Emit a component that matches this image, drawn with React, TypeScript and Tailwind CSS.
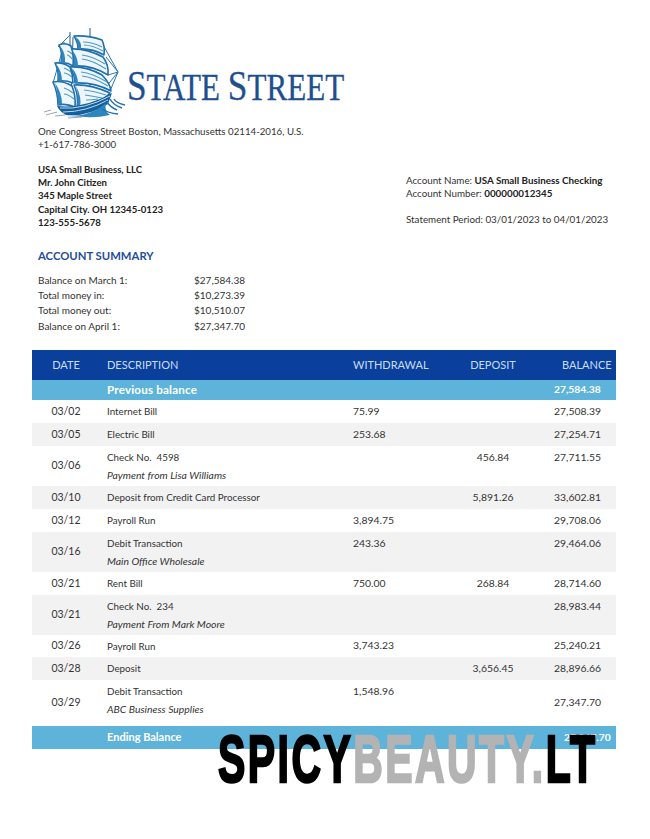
const rows = [
  { date: "03/02", desc: "Internet Bill", out: "75.99", bal: "27,508.39", h: "h-[23px]" },
  { date: "03/05", desc: "Electric Bill", out: "253.68", bal: "27,254.71", h: "h-[23px]", shade: true },
  { date: "03/06", desc: "Check No.  4598", note: "Payment from Lisa Williams", dep: "456.84", bal: "27,711.55", h: "h-[40px]" },
  { date: "03/10", desc: "Deposit from Credit Card Processor", dep: "5,891.26", bal: "33,602.81", h: "h-[23px]", shade: true },
  { date: "03/12", desc: "Payroll Run", out: "3,894.75", bal: "29,708.06", h: "h-[23px]" },
  { date: "03/16", desc: "Debit Transaction", note: "Main Office Wholesale", out: "243.36", bal: "29,464.06", h: "h-[40px]", shade: true },
  { date: "03/21", desc: "Rent Bill", out: "750.00", dep: "268.84", bal: "28,714.60", h: "h-[23px]" },
  { date: "03/21", desc: "Check No.  234", note: "Payment From Mark Moore", bal: "28,983.44", h: "h-[40px]", shade: true },
  { date: "03/26", desc: "Payroll Run", out: "3,743.23", bal: "25,240.21", h: "h-[22px]" },
  { date: "03/28", desc: "Deposit", dep: "3,656.45", bal: "28,896.66", h: "h-[23px]", shade: true },
  { date: "03/29", desc: "Debit Transaction", note: "ABC Business Supplies", out: "1,548.96", bal: "27,347.70", h: "h-[46px]", midBal: true },
];

const summary = [
  ["Balance on March 1:", "$27,584.38"],
  ["Total money in:", "$10,273.39"],
  ["Total money out:", "$10,510.07"],
  ["Balance on April 1:", "$27,347.70"],
];

const cols = "grid grid-cols-[68px_253px_94px_92px_77px]";

function ShipLogo() {
  const sails = [
    "M34 11 Q48 10 62 15 Q65 21 64 30 Q52 23 38 24 Q38 17 34 11Z",
    "M30 24 Q46 23 63 32 Q69 40 68 50 Q52 40 34 41 Q35 32 30 24Z",
    "M30 42 Q46 41 62 50 Q70 58 71 66 Q54 57 35 58 Q35 50 30 42Z",
    "M34 60 Q50 59 70 68 L62 76 Q50 80 37 83 Q39 71 34 60Z",
    "M19 20 Q25 17 31 21 Q34 30 33 41 Q27 37 21 38 Q23 28 19 20Z",
    "M15 38 Q23 37 30 42 Q33 50 33 58 Q26 55 18 56 Q19 46 15 38Z",
    "M13 57 Q22 55 32 61 Q36 71 35 82 Q26 78 18 80 Q18 68 13 57Z",
  ];
  const shades = [
    "M36 12 Q42 17 41 24 L38 24 Q38 17 36 12Z",
    "M32 25 Q38 32 38 41 L34 41 Q35 32 32 25Z",
    "M32 43 Q38 50 38 58 L35 58 Q35 50 32 43Z",
    "M36 61 Q42 72 40 82 L37 83 Q39 71 36 61Z",
    "M20 21 Q26 28 25 38 L21 38 Q23 28 20 21Z",
    "M16 39 Q22 46 22 56 L18 56 Q19 46 16 39Z",
    "M15 58 Q22 68 22 79 L18 80 Q18 68 15 58Z",
  ];
  const hatch = [
    "M43 17 Q52 17 62 22", "M44 20 Q52 20 63 26", "M42 30 Q52 31 65 39", "M42 34 Q52 35 66 44",
    "M41 47 Q52 48 67 57", "M42 51 Q53 52 68 61", "M27 26 Q29 26 32 29", "M27 30 Q29 30 32 34",
    "M24 43 Q27 44 31 47", "M24 48 Q27 48 32 52", "M24 63 Q28 64 33 68", "M24 69 Q28 69 34 74", "M44 65 Q54 66 66 70", "M45 70 Q52 71 62 73", "M46 75 Q52 75 58 74",
  ];
  return (
    <svg viewBox="0 0 100 95" className="w-[100px] h-[95px] shrink-0">
      <path d="M50 3 L50 14 M30 7 L30 24 M33 12 L31 80 M50 14 L50 78 M24 17 L22 80" stroke="#1d5c98" strokeWidth="1" fill="none" />
      <path d="M62 18 L78 47 L66 62 M66 32 L78 47 M68 50 L78 47 M70 66 L78 47 M24 20 L13 58 M30 10 L18 22" stroke="#2a78b0" strokeWidth="1" fill="none" />
      {sails.map((d, i) => (
        <path key={i} d={d} fill="#eef6fb" stroke="#1f70ac" strokeWidth="1.6" strokeLinejoin="round" />
      ))}
      {shades.map((d, i) => (
        <path key={i} d={d} fill="#2f86bd" />
      ))}
      {hatch.map((d, i) => (
        <path key={i} d={d} fill="none" stroke="#4f9ac8" strokeWidth="1.1" />
      ))}
      <path d="M17 81 Q44 84 72 68 L68 79 Q48 92 26 90 Q20 87 17 81Z" fill="#14609f" />
      <path d="M20 83 Q44 85 70 71 M23 87 Q46 87 68 75" stroke="#cfe6f3" strokeWidth="0.9" fill="none" />
      <path d="M26 91 Q50 92 66 78 Q64 86 70 90 Q56 93 46 92Z" fill="#2f86bd" />
      <path d="M66 76 Q70 82 77 85 M70 74 Q73 80 82 83 M74 74 Q76 78 85 80 M62 84 Q68 88 78 89" stroke="#1f70ac" strokeWidth="1.4" fill="none" />
      <path d="M4 87 L11 85 M6 90 L17 87 M15 91 L25 90 M28 93 L42 92" stroke="#8fa9bd" strokeWidth="1" fill="none" />
    </svg>
  );
}

function Row({ r }: { r: (typeof rows)[number] }) {
  return (
    <div className={`${cols} ${r.h} ${r.shade ? "bg-[#f2f2f2]" : ""} text-[#333]`}>
      <div className="flex items-center justify-center pt-[1px] text-[10.5px]">{r.date}</div>
      <div className={`pl-[7px] flex flex-col ${r.note ? "pt-[2px]" : "justify-center"}`}>
        <div className="text-[9.8px] leading-[18px] whitespace-pre">{r.desc}</div>
        {r.note && <div className="text-[10.4px] leading-[18px] italic">{r.note}</div>}
      </div>
      <div className={`flex text-[10.4px] ${r.note ? "pt-[2px] leading-[18px]" : "items-center"}`}>{r.out}</div>
      <div className={`flex justify-center text-[10.4px] ${r.note ? "pt-[2px] leading-[18px]" : "items-center"}`}>{r.dep}</div>
      <div className={`flex pl-[15px] text-[10.4px] ${r.note && !r.midBal ? "pt-[2px] leading-[18px]" : "items-center"}`}>{r.bal}</div>
    </div>
  );
}

export default function App() {
  return (
    <div className="relative w-[650px] h-[839px] overflow-hidden bg-white font-['Lato',sans-serif] text-[#333]">
      <div className="flex items-start pt-[25px] pl-[40px] h-[122px]">
        <ShipLogo />
        <div className="mt-[40px] -ml-[13px] origin-left scale-x-[0.84] font-['Liberation_Serif',serif] text-[#1e4f8f] whitespace-nowrap leading-none [-webkit-text-stroke:0.3px_currentColor]">
          <span className="text-[42px]">S</span>
          <span className="text-[37px]">TATE </span>
          <span className="text-[42px]">S</span>
          <span className="text-[37px]">TREET</span>
        </div>
      </div>

      <div className="pl-[38px] pt-[3px] text-[9.7px] leading-[12.5px]">
        <div>One Congress Street Boston, Massachusetts  02114-2016, U.S.</div>
        <div>+1-617-786-3000</div>
      </div>

      <div className="flex pl-[38px] pt-[13px]">
        <div className="w-[368px] text-[9.6px] leading-[13.2px] font-bold text-[#222]">
          <div>USA Small Business,  LLC</div>
          <div>Mr. John Citizen</div>
          <div>345 Maple  Street</div>
          <div>Capital City. OH 12345-0123</div>
          <div>123-555-5678</div>
        </div>
        <div className="pt-[11px] text-[9.8px] leading-[13px]">
          <div>Account Name: <b className="text-[#222]">USA Small Business  Checking</b></div>
          <div>Account Number: <b className="text-[#222]">000000012345</b></div>
          <div className="mt-[13px]">Statement  Period: 03/01/2023 to 04/01/2023</div>
        </div>
      </div>

      <div className="pl-[38px] pt-[19px] text-[11.3px] leading-[16px] font-bold text-[#1f4e9c]">ACCOUNT SUMMARY</div>

      <div className="pl-[38px] pt-[9px] text-[10px] leading-[15.2px]">
        {summary.map(([k, v]) => (
          <div key={k} className="grid grid-cols-[156px_80px]">
            <div>{k}</div>
            <div>{v}</div>
          </div>
        ))}
      </div>

      <div className="mx-[32px] mt-[16px] w-[584px]">
        <div className={`${cols} h-[30px] bg-[#0a3f9c] text-[#c9def2] text-[11px] items-center`}>
          <div className="text-center">DATE</div>
          <div className="pl-[7px]">DESCRIPTION</div>
          <div>WITHDRAWAL</div>
          <div className="text-center">DEPOSIT</div>
          <div className="pl-[23px]">BALANCE</div>
        </div>
        <div className={`${cols} h-[20px] bg-[#5db3d9] text-white font-bold items-center`}>
          <div />
          <div className="pl-[7px] text-[11.6px] tracking-[0.2px]">Previous balance</div>
          <div />
          <div />
          <div className="pl-[15px] text-[10.3px]">27,584.38</div>
        </div>
        {rows.map((r, i) => (
          <Row key={i} r={r} />
        ))}
        <div className={`${cols} h-[23px] bg-[#5db3d9] text-white font-bold items-center`}>
          <div />
          <div className="pl-[7px] text-[11px]">Ending Balance</div>
          <div />
          <div />
          <div className="pl-[25px] text-[10.3px]">27,347.70</div>
        </div>
      </div>

      <div className="absolute left-[218px] top-[722px] origin-left scale-x-[0.62] font-['Liberation_Sans',sans-serif] font-bold text-[66px] leading-[74px] tracking-[4px] whitespace-nowrap text-black [-webkit-text-stroke:2.5px_currentColor]">
        SPICY<span className="text-[#b3b3b3]">BEAUTY.</span>LT
      </div>
    </div>
  );
}
